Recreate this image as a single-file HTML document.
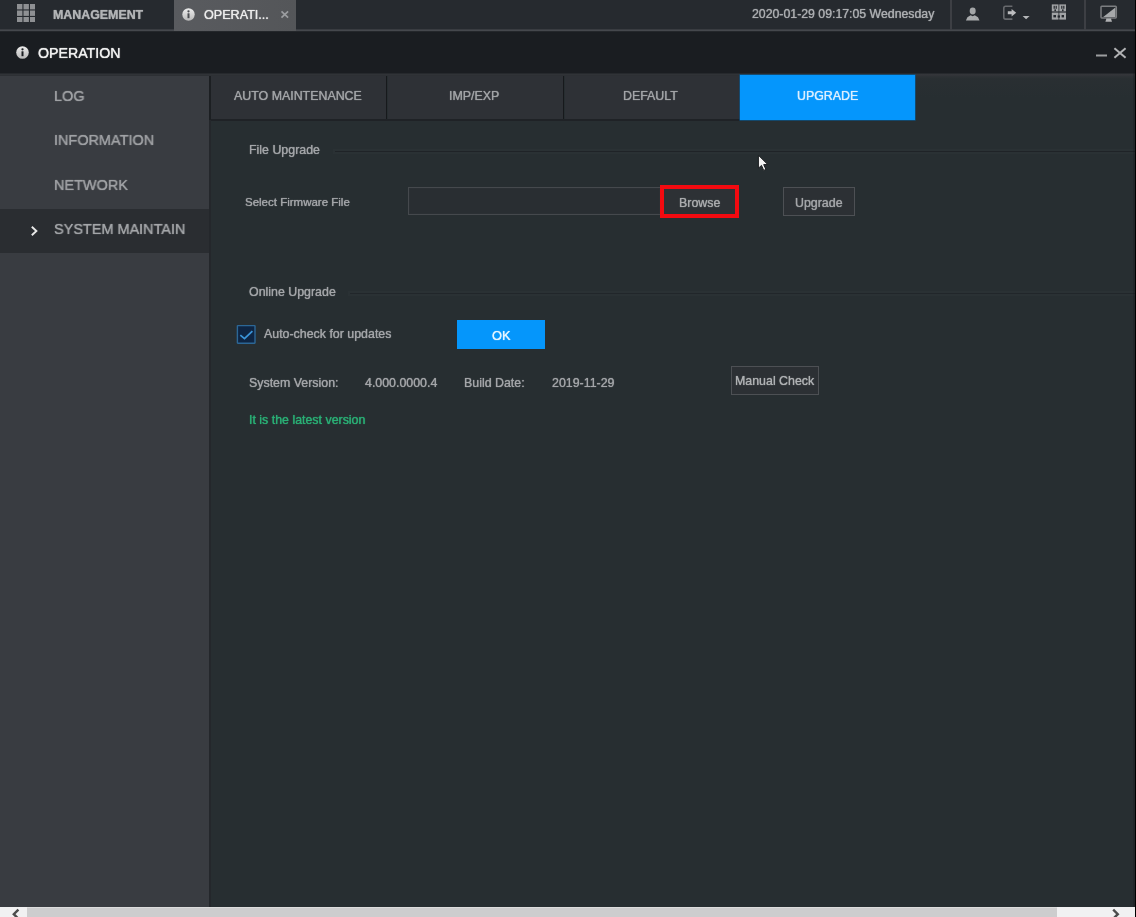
<!DOCTYPE html>
<html lang="en">
<head>
<meta charset="utf-8">
<title>Operation - Upgrade</title>
<style>
*{box-sizing:border-box;margin:0;padding:0}
html,body{width:1136px;height:917px;overflow:hidden;background:#272e31}
body{position:relative;font-family:"Liberation Sans",Arial,sans-serif;color:#b4b6b8;font-size:12.4px}
.abs{position:absolute}
.t{position:absolute;white-space:nowrap;line-height:1;transform-origin:0 50%;will-change:transform;filter:blur(.5px);-webkit-text-stroke:.12px currentColor;text-shadow:0 0 1px currentColor}
#topbar{left:0;top:0;width:1136px;height:30px;background:#262a2f}
#topline{left:0;top:29px;width:1136px;height:3px;background:linear-gradient(#393c41 0,#393c41 33%,#45484d 33%,#45484d 67%,#24272b 67%)}
#tab-op{left:173.5px;top:0;width:122px;height:30.6px;background:linear-gradient(90deg,#595b5f,#545659)}
#titlebar{left:0;top:32px;width:1136px;height:41px;background:#1a1d21}
#titleline{left:0;top:73px;width:1136px;height:3px;background:linear-gradient(#26292d 0,#26292d 33%,#303337 33%,#303337 67%,#2d3034 67%)}
#sidebar{left:0;top:76px;width:209px;height:831px;background:#393c41}
#side-active{left:0;top:208.5px;width:209px;height:44px;background:#2a2d31}
#content{left:209px;top:76px;width:927px;height:831px;background:#272e31}
#vline{left:209px;top:76px;width:2px;height:831px;background:#24272b}
#vline2{left:209px;top:76px;width:2px;height:44px;background:#1c1f22}
.tab{position:absolute;top:76px;height:43.3px;background:#2e3136}
.tabsep{position:absolute;top:76px;width:1.6px;height:44px;background:#17191c}
.tab.on{top:74.6px;height:45.2px;background:#0596fc;box-shadow:0 0 0 .6px #075a94}
#tabline{left:211px;top:119.3px;width:529px;height:1.7px;background:#1f2226}
.hr{position:absolute;height:1.2px;background:#1f2327;box-shadow:0 0 0 2px rgba(70,74,80,.10)}
.btn{position:absolute;border:1px solid #4d5054;background:#2c3034}
#scroll{left:0;top:906.7px;width:1135px;height:11px;background:#f1f1f2}
#thumb{left:27px;top:906.7px;width:1029.6px;height:11px;background:#cdcdce;border-top:1px solid #dcdcdc}
#redge{left:1135px;top:0;width:1px;height:917px;background:#000}
#redge2{left:1132.5px;top:32px;width:2.5px;height:875px;background:rgba(20,20,22,.25)}
</style>
</head>
<body>
<div class="abs" id="topbar"></div>
<div class="abs" id="topline"></div>
<div class="abs" id="tab-op"></div>
<div class="abs" id="titlebar"></div>
<div class="abs" id="titleline"></div>
<div class="abs" id="sidebar"></div>
<div class="abs" id="side-active"></div>
<div class="abs" id="content"></div>
<div class="abs" style="left:915px;top:74px;width:221px;height:24px;background:linear-gradient(rgba(52,54,58,.9),rgba(46,49,53,.35) 20%,rgba(46,49,53,0))"></div>
<div class="abs" id="vline"></div>
<div class="abs" id="vline2"></div>

<!-- top bar -->
<svg class="abs" style="left:16.9px;top:3.9px;filter:blur(.3px)" width="18.4" height="18.4" viewBox="0 0 18.4 18.4">
 <g fill="#8e9093"><rect x="0" y="0" width="5.4" height="5.4"/><rect x="6.5" y="0" width="5.4" height="5.4"/><rect x="13" y="0" width="5.4" height="5.4"/>
 <rect x="0" y="6.5" width="5.4" height="5.4"/><rect x="6.5" y="6.5" width="5.4" height="5.4"/><rect x="13" y="6.5" width="5.4" height="5.4"/>
 <rect x="0" y="13" width="5.4" height="5.4"/><rect x="6.5" y="13" width="5.4" height="5.4"/><rect x="13" y="13" width="5.4" height="5.4"/></g>
</svg>
<div class="t" id="t-mgmt" style="left:52.8px;top:8.8px;font-size:12.4px;font-weight:bold;color:#b2b4b6">MANAGEMENT</div>
<svg class="abs" style="left:182px;top:8.3px;filter:blur(.3px)" width="13" height="13" viewBox="0 0 13 13"><defs><linearGradient id="ig" x1="0" y1="0" x2="0" y2="1"><stop offset="0" stop-color="#ededed"/><stop offset="1" stop-color="#b9b9b9"/></linearGradient></defs><circle cx="6.5" cy="6.5" r="6.2" fill="url(#ig)"/><rect x="5.5" y="5.3" width="2" height="4.9" fill="#4a4c50"/><circle cx="6.5" cy="3.3" r="1.15" fill="#4a4c50"/></svg>
<div class="t" id="t-optab" style="left:203.6px;top:9.1px;font-size:12.6px;color:#ececec">OPERATI...</div>
<svg class="abs" style="left:280px;top:10px;filter:blur(.3px)" width="10" height="10" viewBox="0 0 10 10"><path d="M1.5 1.4 L8.1 7.6 M8.1 1.4 L1.5 7.6" stroke="#9b9da0" stroke-width="1.7" fill="none"/></svg>
<div class="t" id="t-date" style="left:752px;top:8.4px;font-size:12.3px;color:#acaeb1">2020-01-29 09:17:05 Wednesday</div>
<div class="abs" style="left:950px;top:0;width:1.5px;height:30px;background:#3d3f44"></div>
<div class="abs" style="left:1084.3px;top:0;width:1.7px;height:30px;background:#3d3f44"></div>
<!-- user icon -->
<svg class="abs" style="left:964px;top:5px;filter:blur(.35px)" width="18" height="18" viewBox="0 0 18 18">
 <ellipse cx="8.7" cy="6" rx="3" ry="3.4" fill="#a4a6a8"/>
 <path d="M1.9 15.4 L3.4 12.2 L6.6 10.3 L8.7 11.2 L10.8 10.3 L14 12.2 L15.5 15.4 Z" fill="#a9abad"/>
</svg>
<!-- logout icon -->
<svg class="abs" style="left:1001px;top:4px;filter:blur(.35px)" width="32" height="18" viewBox="0 0 32 18">
 <path d="M11.4 2.3 H4.6 Q2.8 2.3 2.8 4.1 V13.3 Q2.8 15.1 4.6 15.1 H11.4" fill="none" stroke="#67696d" stroke-width="1.6"/>
 <path d="M6.8 7.3 H10.6 V5 L15.2 8.8 L10.6 12.6 V10.3 H6.8 Z" fill="#bcbdbf"/>
 <path d="M21.6 12 H28.6 L25.1 15.3 Z" fill="#b4b6b8"/>
</svg>
<!-- qr icon -->
<svg class="abs" style="left:1051px;top:4px;filter:blur(.35px)" width="16" height="17" viewBox="0 0 16 17">
 <g fill="#a2a4a6">
 <rect x="0.8" y="0.4" width="6.7" height="7"/><rect x="8.3" y="0.4" width="6.7" height="7"/>
 <rect x="0.8" y="8.6" width="6.7" height="7"/><rect x="8.3" y="8.6" width="6.7" height="7"/>
 </g>
 <g fill="#262a2f">
 <rect x="2.6" y="1.8" width="1.2" height="3"/><rect x="4.6" y="1.8" width="1.2" height="3"/>
 <rect x="10.2" y="1.8" width="1.2" height="3"/><rect x="12.2" y="1.8" width="1.2" height="3"/>
 <rect x="2.4" y="11" width="2.6" height="2.4"/><rect x="6.6" y="11.4" width="2.4" height="2.2"/><rect x="10.6" y="11" width="2.4" height="2.4"/>
 <rect x="3.4" y="5.4" width="1.6" height="1.8"/><rect x="11" y="5.4" width="1.6" height="1.8"/>
 </g>
</svg>
<!-- monitor icon -->
<svg class="abs" style="left:1099px;top:4px;filter:blur(.35px)" width="20" height="19" viewBox="0 0 20 19">
 <rect x="2" y="2.3" width="15.3" height="11.6" rx="0.8" fill="#262a2f" stroke="#7c7e81" stroke-width="1.5"/>
 <path d="M16.4 3.4 V13 H4.2 Z" fill="#a6a8aa"/>
 <path d="M7.4 14.6 H12 L13 17.8 H6.4 Z" fill="#b0b1b3"/>
</svg>

<!-- title bar -->
<svg class="abs" style="left:15.8px;top:46.2px;filter:blur(.3px)" width="13" height="13" viewBox="0 0 13 13"><circle cx="6.5" cy="6.5" r="6.3" fill="url(#ig)"/><rect x="5.5" y="5.3" width="2" height="4.9" fill="#1a1d21"/><circle cx="6.5" cy="3.3" r="1.15" fill="#1a1d21"/></svg>
<div class="t" id="t-op" style="left:38.2px;top:45.9px;font-size:14.2px;color:#f0f0f0">OPERATION</div>
<svg class="abs" style="left:1094px;top:45px;filter:blur(.3px)" width="36" height="16" viewBox="0 0 36 16">
 <rect x="2" y="9.5" width="11" height="2" fill="#9c9ea0"/>
 <path d="M20.4 3.2 L31.6 12.8 M31.6 3.2 L20.4 12.8" stroke="#b2b3b5" stroke-width="2" fill="none"/>
</svg>

<!-- sidebar -->
<div class="t" id="t-s1" style="left:54.1px;top:88.1px;font-size:15.3px;color:#a0a2a5;transform:scaleX(.945)">LOG</div>
<div class="t" id="t-s2" style="left:54.1px;top:132.4px;font-size:15.3px;color:#a0a2a5;transform:scaleX(.945)">INFORMATION</div>
<div class="t" id="t-s3" style="left:54.1px;top:176.6px;font-size:15.3px;color:#a0a2a5;transform:scaleX(.945)">NETWORK</div>
<svg class="abs" style="left:29px;top:224px;filter:blur(.3px)" width="12" height="14" viewBox="0 0 12 14"><path d="M2.8 2.8 L7.4 7 L2.8 11.2" fill="none" stroke="#e8e8e8" stroke-width="1.9"/></svg>
<div class="t" id="t-s4" style="left:54.1px;top:220.5px;font-size:15.3px;color:#a4a6a9;transform:scaleX(.945)">SYSTEM MAINTAIN</div>

<!--TABS-->
<!--SIDEBAR-->
<!-- tabs -->
<div class="tab" style="left:211px;width:175px"></div>
<div class="tab" style="left:387.5px;width:175.5px"></div>
<div class="tab" style="left:564.5px;width:175.5px"></div>
<div class="tabsep" style="left:385.6px"></div>
<div class="tabsep" style="left:562.6px"></div>
<div class="abs" id="tabline"></div>
<div class="tab on" style="left:740px;width:175.4px"></div>
<div class="t" id="t-t1" style="left:234.1px;top:90.4px;font-size:12.4px;color:#a2a4a7">AUTO MAINTENANCE</div>
<div class="t" id="t-t2" style="left:449.2px;top:90.4px;font-size:12.4px;color:#a2a4a7">IMP/EXP</div>
<div class="t" id="t-t3" style="left:623.4px;top:90.4px;font-size:12.4px;color:#a2a4a7">DEFAULT</div>
<div class="t" id="t-t4" style="left:796.9px;top:90.4px;font-size:12.4px;color:#dceeff">UPGRADE</div>

<!-- file upgrade -->
<div class="t" id="t-fu" style="left:248.7px;top:143.6px;color:#a4a6a9">File Upgrade</div>
<div class="hr" style="left:334.6px;top:150.8px;width:801px"></div>
<div class="t" id="t-sff" style="left:244.9px;top:197.3px;font-size:11.5px;color:#a4a6a9">Select Firmware File</div>
<div class="abs" style="left:408px;top:187px;width:253px;height:28px;border:1px solid #45494d;background:#292e32;box-shadow:inset 0 0 0 1px #2b3034"></div>
<div class="abs" style="left:659.8px;top:184.7px;width:79.4px;height:33.4px;border:4px solid #f30a10;background:#2d3135"></div>
<div class="t" id="t-br" style="left:678.9px;top:196.9px;color:#aaacae">Browse</div>
<div class="btn" style="left:783.2px;top:187px;width:72px;height:28.6px"></div>
<div class="t" id="t-up" style="left:795.1px;top:197.2px;color:#a4a6a9">Upgrade</div>
<!-- mouse cursor -->
<svg class="abs" style="left:757px;top:154px;filter:blur(.3px)" width="14" height="19" viewBox="0 0 14 19">
 <path d="M1.4 1.2 V14.2 L4.5 11.4 L6.7 16.4 L8.9 15.4 L6.7 10.6 H10.8 Z" fill="#f4f4f4" stroke="#1b1d20" stroke-width="1"/>
</svg>

<!-- online upgrade -->
<div class="t" id="t-ou" style="left:248.6px;top:285.6px;color:#a4a6a9">Online Upgrade</div>
<div class="hr" style="left:350.4px;top:292.7px;width:786px;background:#21262a"></div>
<svg class="abs" style="left:235px;top:323px;filter:blur(.35px)" width="23" height="23" viewBox="0 0 23 23"><rect x="2.4" y="2.6" width="17.6" height="17.6" rx="0.4" fill="#0e2543" stroke="#2c6796" stroke-width="1.4"/><path d="M5.3 12.1 L9.5 15.6 L17.4 8.2" fill="none" stroke="#3b94d8" stroke-width="1.8"/></svg>
<div class="t" id="t-ac" style="left:264.4px;top:327.7px;color:#a4a6a9">Auto-check for updates</div>
<div class="abs" style="left:456.6px;top:320.2px;width:88.9px;height:28.7px;background:#0596fb"></div>
<div class="t" id="t-ok" style="left:491.6px;top:330px;font-size:12.8px;color:#e6f5ff">OK</div>
<div class="t" id="t-sv" style="left:248.6px;top:376.6px;color:#a4a6a9">System Version:</div>
<div class="t" id="t-ver" style="left:364.7px;top:376.6px;color:#a4a6a9">4.000.0000.4</div>
<div class="t" id="t-bd" style="left:464.1px;top:376.6px;color:#a4a6a9">Build Date:</div>
<div class="t" id="t-dt" style="left:551.7px;top:376.6px;color:#a4a6a9">2019-11-29</div>
<div class="btn" style="left:730.6px;top:366.4px;width:88.8px;height:28.2px"></div>
<div class="t" id="t-mc" style="left:735.1px;top:375.4px;color:#b0b2b4">Manual Check</div>
<div class="t" id="t-lv" style="left:248.5px;top:413.6px;color:#2bb076">It is the latest version</div>

<!-- scrollbar -->
<div class="abs" id="scroll"></div>
<div class="abs" id="thumb"></div>
<svg class="abs" style="left:0;top:906px" width="1136" height="11" viewBox="0 0 1136 11">
 <path d="M18.4 3.6 L13.8 8.2 L18.4 12.8" fill="none" stroke="#4c4c4c" stroke-width="2.4"/>
 <path d="M1113.2 3.6 L1117.8 8.2 L1113.2 12.8" fill="none" stroke="#4c4c4c" stroke-width="2.4"/>
</svg>
<div class="abs" id="redge2"></div>
<div class="abs" id="redge"></div>
</body>
</html>
